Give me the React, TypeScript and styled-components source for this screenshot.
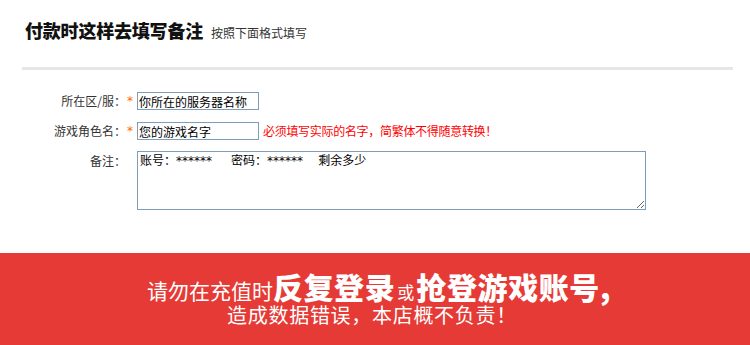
import React from "react";
import styled, { createGlobalStyle } from "styled-components";

const Global = createGlobalStyle`
  html, body { margin: 0; padding: 0; background: #fff; }
  body { font-family: "Noto Sans CJK SC", "Noto Sans", sans-serif; width: 750px; height: 345px; overflow: hidden; }
`;

const Page = styled.div`
  width: 750px;
  height: 345px;
  display: flex;
  flex-direction: column;
`;

const Header = styled.div`
  display: flex;
  align-items: baseline;
  gap: 8px;
  padding: 19px 0 0 25px;
  height: 29px;
`;

const Title = styled.h1`
  margin: 0;
  font-size: 18px;
  line-height: 22px;
  font-weight: 900;
  color: #111;
  letter-spacing: -0.2px;
`;

const SubTitle = styled.span`
  font-size: 12px;
  line-height: 16px;
  color: #333;
`;

const Divider = styled.div`
  height: 3px;
  background: #e6e6e6;
  margin: 19px 17px 0 22px;
`;

const Form = styled.div`
  display: grid;
  grid-template-columns: 126px 11px auto;
  align-items: center;
  row-gap: 12px;
  margin-top: 22px;
`;

const Label = styled.label<{ $top?: boolean }>`
  font-size: 12px;
  line-height: 18px;
  color: #333;
  text-align: right;
  align-self: ${(p) => (p.$top ? "start" : "center")};
`;

const Star = styled.span`
  color: #f60;
  font-family: "DejaVu Sans", sans-serif;
  font-size: 12px;
  line-height: 18px;
  padding-left: 1px;
`;

const Field = styled.div`
  display: flex;
  align-items: center;
  gap: 4px;
`;

const Input = styled.input`
  box-sizing: border-box;
  width: 122px;
  height: 18px;
  border: 1px solid #7f9db9;
  padding: 0 1px;
  margin: 0;
  font-family: "Noto Sans CJK SC", sans-serif;
  font-size: 12px;
  color: #000;
  outline: none;
`;

const Warn = styled.span`
  color: #f00;
  font-size: 12px;
  line-height: 18px;
  letter-spacing: -0.3px;
`;

const Area = styled.textarea`
  box-sizing: border-box;
  width: 509px;
  height: 59px;
  border: 1px solid #7f9db9;
  padding: 1px 2px;
  margin: -1px 0 0;
  font-family: "DejaVu Sans", "Noto Sans CJK SC", sans-serif;
  font-size: 12px;
  line-height: 16px;
  color: #000;
  outline: none;
  resize: both;
  white-space: pre;
`;

const Band = styled.div`
  margin-top: auto;
  height: 92px;
  background: #e53a35;
  color: #fff;
  display: flex;
  flex-direction: column;
  align-items: center;
  padding-top: 16px;
  box-sizing: border-box;
`;

const BandLine = styled.div`
  display: flex;
  align-items: baseline;
  white-space: nowrap;
  height: 34px;
  margin-left: 8px;
`;

const Normal = styled.span<{ $size: number; $pad?: number }>`
  font-size: ${(p) => p.$size}px;
  line-height: 24px;
  font-weight: 400;
  padding: 0 ${(p) => p.$pad ?? 0}px;
`;

const Strong = styled.span`
  font-size: 30px;
  line-height: 34px;
  font-weight: 900;
  letter-spacing: 0.6px;
`;

const SecondLine = styled.div`
  font-size: 20px;
  line-height: 24px;
  letter-spacing: 0.7px;
  margin-left: -6px;
`;

export default function App() {
  return (
    <Page>
      <Global />
      <Header>
        <Title>付款时这样去填写备注</Title>
        <SubTitle>按照下面格式填写</SubTitle>
      </Header>
      <Divider />
      <Form>
        <Label>所在区/服：</Label>
        <Star>*</Star>
        <Field>
          <Input readOnly value="你所在的服务器名称" />
        </Field>

        <Label>游戏角色名：</Label>
        <Star>*</Star>
        <Field>
          <Input readOnly value="您的游戏名字" />
          <Warn>必须填写实际的名字，简繁体不得随意转换！</Warn>
        </Field>

        <Label $top>备注：</Label>
        <span />
        <Field>
          <Area readOnly value={"账号：******     密码：******    剩余多少"} />
        </Field>
      </Form>
      <Band>
        <BandLine>
          <Normal $size={21}>请勿在充值时</Normal>
          <Strong>反复登录</Strong>
          <Normal $size={17} $pad={2}>或</Normal>
          <Strong>抢登游戏账号,</Strong>
        </BandLine>
        <SecondLine>造成数据错误，本店概不负责！</SecondLine>
      </Band>
    </Page>
  );
}
